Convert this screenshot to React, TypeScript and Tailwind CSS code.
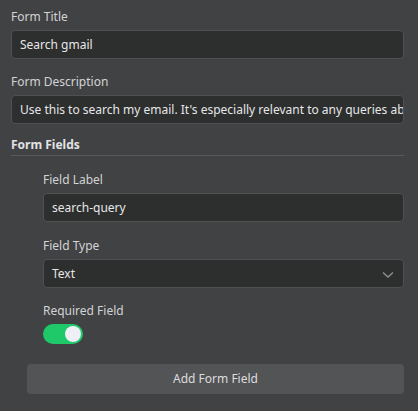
import {useState} from "react";

function Label({children}: {children: string}) {
    return <div className="text-[12px] leading-[20px] text-[#d2d3d4] mb-[3px]">{children}</div>;
}

function TextBox({value}: {value: string}) {
    return (
        <div
            className="h-[29px] rounded-[4px] border border-[#4f5052] bg-[#2d2e2e] px-[8px] flex items-center overflow-hidden whitespace-nowrap text-[12px] text-[#e6e7e8]">
            {value}
        </div>
    );
}

function App() {
    const [required, setRequired] = useState(true);

    return (
        <div
            className="w-[418px] h-[411px] bg-[#414244] pl-[11px] pr-[14px] pt-[7px] overflow-hidden"
            style={{fontFamily: '"Noto Sans", "Open Sans", sans-serif'}}>
            <Label>Form Title</Label>
            <TextBox value="Search gmail"/>

            <div className="mt-[13px]">
                <Label>Form Description</Label>
                <TextBox
                    value="Use this to search my email. It's especially relevant to any queries about emails, messages or contacts."/>
            </div>

            <div
                className="mt-[11px] text-[12px] leading-[20px] font-bold text-[#e2e3e4] border-b border-[#58595b]">
                Form Fields
            </div>

            <div className="pl-[32px] mt-[14px]">
                <Label>Field Label</Label>
                <TextBox value="search-query"/>

                <div className="mt-[14px]">
                    <Label>Field Type</Label>
                    <div
                        className="h-[29px] rounded-[4px] border border-[#4f5052] bg-[#2d2e2e] px-[8px] flex items-center justify-between text-[12px] text-[#e6e7e8]">
                        <span>Text</span>
                        <svg width="12" height="8" viewBox="0 0 12 8" className="mr-[1px] mt-[2px]">
                            <path d="M1 1.5 L6 6 L11 1.5" fill="none" stroke="#8d8e90" strokeWidth="1.4"/>
                        </svg>
                    </div>
                </div>

                <div className="mt-[13px]">
                    <Label>Required Field</Label>
                    <button
                        onClick={() => setRequired(!required)}
                        className={`mt-[3px] w-[40px] h-[20px] rounded-full flex items-center px-[2px] ${required ? "bg-[#1fc96a] justify-end" : "bg-[#5a5b5d] justify-start"}`}>
                        <span className="w-[16px] h-[16px] rounded-full bg-[#eef0f6]"/>
                    </button>
                </div>
            </div>

            <button
                className="mt-[20px] ml-[16px] w-[377px] h-[30px] rounded-[4px] bg-[#535456] text-[12px] text-[#dcdddf]">
                Add Form Field
            </button>
        </div>
    );
}

export default App;
